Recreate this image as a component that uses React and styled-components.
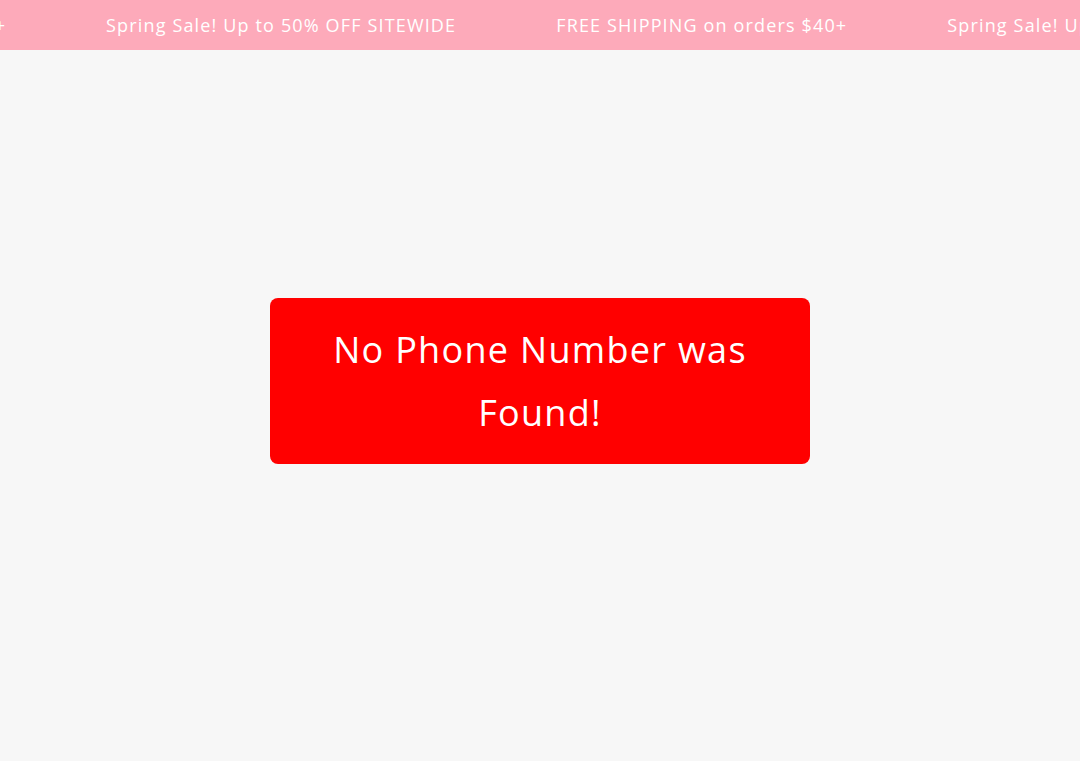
import React from 'react';
import styled, { createGlobalStyle } from 'styled-components';

const GlobalStyle = createGlobalStyle`
  html, body {
    margin: 0;
    padding: 0;
    background: #f7f7f7;
  }
  body {
    font-family: 'Open Sans', 'Liberation Sans', sans-serif;
  }
`;

const Page = styled.div`
  min-height: 761px;
  display: flex;
  flex-direction: column;
`;

const AnnouncementBar = styled.div`
  height: 50px;
  background: #fdaaba;
  overflow: hidden;
  display: flex;
  align-items: center;
`;

const Track = styled.div`
  display: flex;
  white-space: nowrap;
  margin-left: ${(props) => props.offset}px;
`;

const Message = styled.span`
  color: #fff;
  font-size: 18px;
  letter-spacing: 1.15px;
  padding: 0 50px;
`;

const Main = styled.main`
  flex: 1;
  display: flex;
  justify-content: center;
  padding-top: 248px;
`;

const Alert = styled.div`
  width: 540px;
  box-sizing: border-box;
  padding: 20px 50px;
  background: #ff0000;
  border-radius: 8px;
  color: #fff;
  font-size: 36px;
  letter-spacing: 1.3px;
  line-height: 63px;
  text-align: center;
  align-self: flex-start;
`;

const messages = [
  'FREE SHIPPING on orders $40+',
  'Spring Sale! Up to 50% OFF SITEWIDE',
  'FREE SHIPPING on orders $40+',
  'Spring Sale! Up to 50% OFF SITEWIDE',
];

const App = () => (
  <Page>
    <GlobalStyle />
    <AnnouncementBar>
      <Track offset={-335}>
        {messages.map((text, i) => (
          <Message key={i}>{text}</Message>
        ))}
      </Track>
    </AnnouncementBar>
    <Main>
      <Alert>No Phone Number was Found!</Alert>
    </Main>
  </Page>
);

export default App;
